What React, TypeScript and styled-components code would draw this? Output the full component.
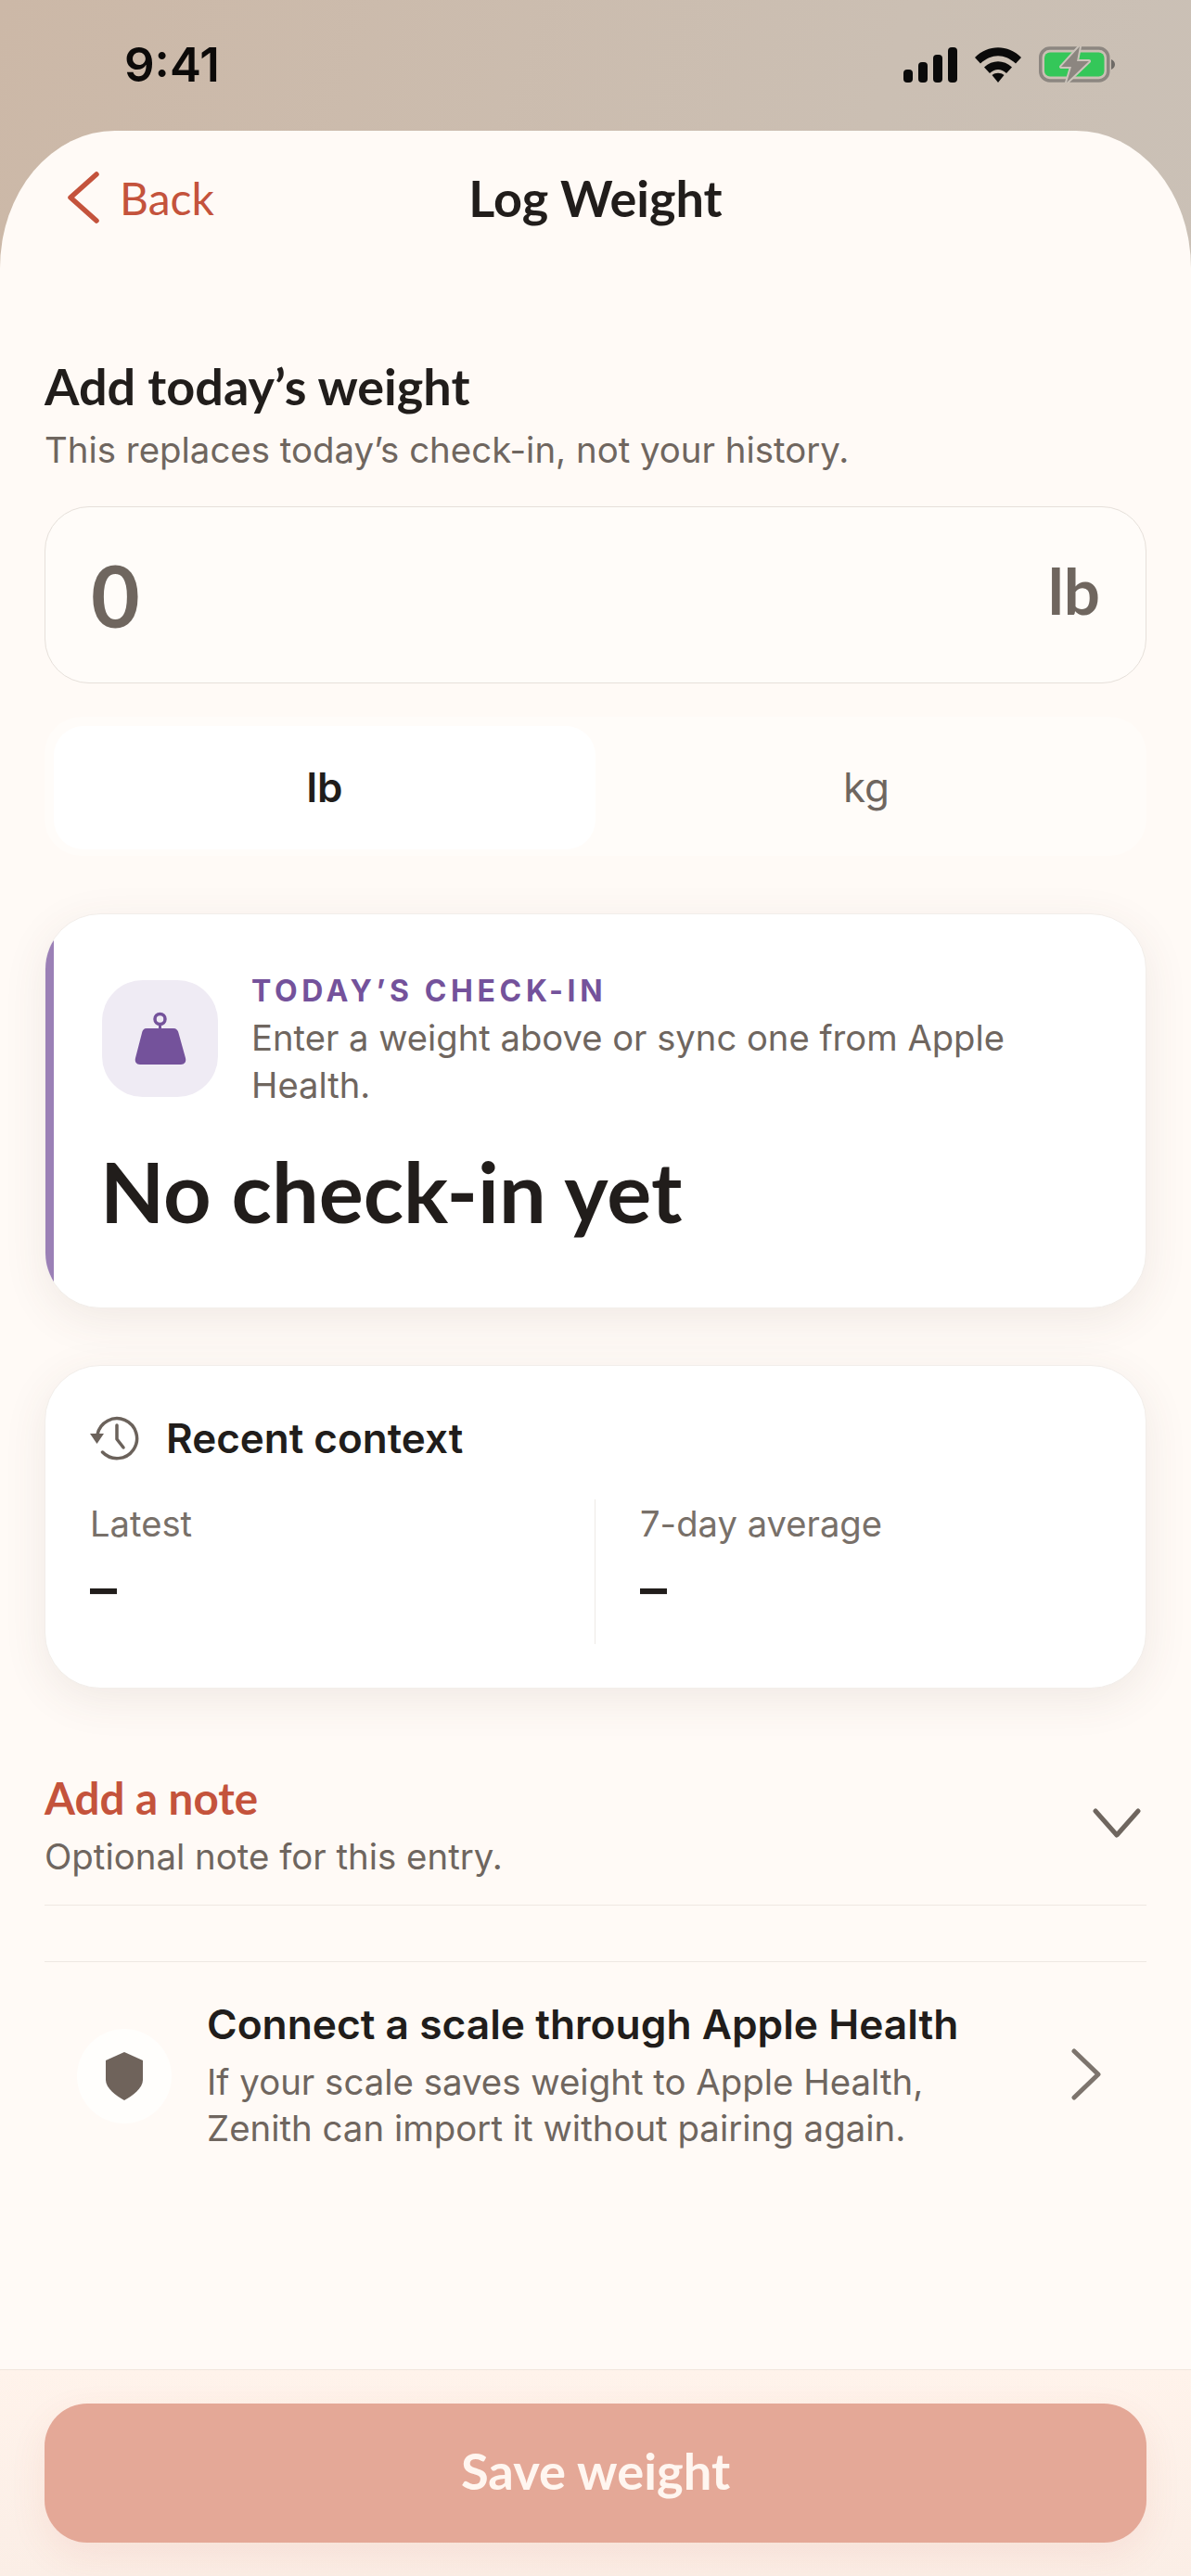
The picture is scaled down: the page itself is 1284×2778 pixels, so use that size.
import styled, { createGlobalStyle } from "styled-components";

const GlobalStyle = createGlobalStyle`
  html, body {
    margin: 0;
    padding: 0;
    background: #fffaf6;
  }
  * {
    box-sizing: border-box;
  }
`;

const display = `"Lato", "Open Sans", sans-serif`;
const body = `"Inter", "Roboto", sans-serif`;

const Screen = styled.div`
  width: 1284px;
  height: 2778px;
  display: flex;
  flex-direction: column;
  overflow: hidden;
  background: linear-gradient(108deg, #ccb8a7 0%, #cbbfb3 45%, #c9c3bc 100%);
  font-family: ${body};
`;

const StatusBar = styled.div`
  height: 141px;
  flex: none;
  display: flex;
  justify-content: space-between;
  align-items: flex-start;
  padding: 40px 82px 0 134px;
`;

const Time = styled.div`
  font-size: 51px;
  line-height: 60px;
  font-weight: 600;
  color: #0c0a09;
`;

const StatusIcons = styled.div`
  display: flex;
  align-items: center;
  gap: 19px;
  padding-top: 10px;
`;

const Sheet = styled.div`
  flex: 1;
  display: flex;
  flex-direction: column;
  border-radius: 124px 124px 0 0 / 148px 148px 0 0;
  background: #fffaf6;
  overflow: hidden;
`;

const Nav = styled.div`
  height: 144px;
  flex: none;
  display: grid;
  grid-template-columns: 1fr auto 1fr;
  align-items: center;
  padding: 0 71px;
`;

const BackLink = styled.div`
  display: flex;
  align-items: center;
  gap: 20px;
  font-family: ${display};
  font-size: 48px;
  color: #c4533c;
`;

const NavTitle = styled.div`
  font-family: ${display};
  font-size: 54px;
  font-weight: 700;
  color: #211d1b;
`;

const Content = styled.div`
  flex: 1;
  padding: 102px 48px 0;
  display: flex;
  flex-direction: column;
`;

const Heading = styled.h2`
  margin: 0;
  font-family: ${display};
  font-size: 54px;
  line-height: 60px;
  font-weight: 700;
  color: #211d1b;
`;

const Muted = styled.p`
  margin: 0;
  font-size: 38.4px;
  line-height: 50px;
  color: #6f665f;
`;

const Subtitle = styled(Muted)`
  margin: 13px 0 36px;
`;

const WeightInput = styled.div`
  height: 191px;
  flex: none;
  display: flex;
  justify-content: space-between;
  align-items: center;
  padding: 0 49px;
  border: 1.5px solid #e6e0da;
  border-radius: 48px;
  background: #fffcf9;
  font-family: ${display};
  color: #6f665f;
`;

const WeightValue = styled.span`
  font-size: 91px;
  font-weight: 700;
  line-height: 100px;
`;

const WeightUnit = styled.span`
  font-size: 69px;
  font-weight: 700;
  line-height: 80px;
  margin-top: -10px;
`;

const Segments = styled.div`
  height: 150px;
  flex: none;
  margin-top: 36px;
  padding: 10px 10px 7px;
  display: grid;
  grid-template-columns: 1fr 1fr;
  border-radius: 40px;
  background: #fffcf9;
`;

const Segment = styled.div<{ $active?: boolean }>`
  display: flex;
  align-items: center;
  justify-content: center;
  padding-bottom: 2px;
  border-radius: 32px;
  font-size: 44px;
  font-weight: ${(props) => (props.$active ? 600 : 400)};
  color: ${(props) => (props.$active ? "#211d1b" : "#6f665f")};
  background: ${(props) => (props.$active ? "#ffffff" : "transparent")};
`;

const Card = styled.div`
  flex: none;
  background: #ffffff;
  border: 1.5px solid #f2eeea;
  border-radius: 60px;
  box-shadow: 0 12px 48px rgba(90, 70, 55, 0.09);
`;

const CheckInCard = styled(Card)`
  height: 426px;
  margin-top: 62px;
  display: flex;
  overflow: hidden;
`;

const AccentBar = styled.div`
  width: 9px;
  flex: none;
  background: #9b80b6;
`;

const CheckInBody = styled.div`
  flex: 1;
  padding: 71px 60px 0 52px;
`;

const CheckInTop = styled.div`
  display: flex;
  gap: 36px;
`;

const IconTile = styled.div`
  width: 125px;
  height: 126px;
  flex: none;
  display: flex;
  align-items: center;
  justify-content: center;
  border-radius: 44px;
  background: #efebf4;
`;

const Eyebrow = styled.div`
  font-size: 32px;
  line-height: 34px;
  margin-top: -5px;
  font-weight: 700;
  letter-spacing: 4.6px;
  color: #74529b;
`;

const CheckInText = styled(Muted)`
  font-size: 38.2px;
  line-height: 51px;
  margin-top: 8px;
`;

const CheckInStatus = styled.div`
  margin-top: 33px;
  margin-left: -2px;
  font-family: ${display};
  font-size: 90px;
  line-height: 110px;
  font-weight: 700;
  color: #211d1b;
`;

const ContextCard = styled(Card)`
  height: 349px;
  margin-top: 61px;
  padding: 50px 50px 0 48px;
`;

const ContextHeader = styled.div`
  display: flex;
  align-items: center;
  gap: 28px;
  height: 56px;
  font-size: 44px;
  font-weight: 600;
  color: #211d1b;
`;

const Stats = styled.div`
  margin-top: 38px;
  display: grid;
  grid-template-columns: 1fr 1fr;
`;

const Stat = styled.div<{ $divided?: boolean }>`
  height: 156px;
  padding-left: ${(props) => (props.$divided ? "48px" : "0")};
  border-left: ${(props) => (props.$divided ? "1.5px solid #eeeae6" : "none")};
`;

const StatLabel = styled(Muted)`
  margin-top: 1px;
  font-size: 38.2px;
  color: #787069;
`;

const StatValue = styled.div`
  margin-top: 15px;
  font-size: 58px;
  line-height: 60px;
  font-weight: 600;
  color: #211d1b;
`;

const NoteRow = styled.div`
  height: 173px;
  flex: none;
  margin-top: 61px;
  padding-top: 27px;
  padding-right: 6px;
  display: flex;
  justify-content: space-between;
  align-items: flex-start;
  border-bottom: 1.5px solid #eee8e2;
`;

const NoteTitle = styled.div`
  font-family: ${display};
  font-size: 47.5px;
  line-height: 60px;
  font-weight: 700;
  color: #c4533c;
`;

const NoteHint = styled(Muted)`
  margin-top: 8px;
`;

const NoteChevron = styled.div`
  padding-top: 40px;
`;

const HealthRow = styled.div`
  margin-top: 60px;
  padding: 38px 48px 0 35px;
  display: flex;
  align-items: flex-start;
  border-top: 1.5px solid #eee8e2;
`;

const ShieldBadge = styled.div`
  width: 102px;
  height: 102px;
  flex: none;
  margin-top: 34px;
  margin-right: 38px;
  display: flex;
  align-items: center;
  justify-content: center;
  border-radius: 50%;
  background: #fffefc;
`;

const HealthText = styled.div`
  flex: 1;
`;

const HealthTitle = styled.div`
  font-size: 44.3px;
  line-height: 58px;
  font-weight: 600;
  color: #211d1b;
`;

const HealthBody = styled(Muted)`
  margin-top: 8px;
`;

const HealthChevron = styled.div`
  padding-top: 55px;
`;

const Footer = styled.div`
  height: 223px;
  flex: none;
  padding: 36px 48px 0;
  border-top: 1.5px solid #f1e6dd;
  background: linear-gradient(180deg, #fff3eb 0%, #fbeee6 100%);
`;

const SaveButton = styled.div`
  height: 150px;
  padding-bottom: 7px;
  display: flex;
  align-items: center;
  justify-content: center;
  border-radius: 46px;
  background: #e4a897;
  box-shadow: 0 14px 40px rgba(196, 83, 60, 0.09);
  font-family: ${display};
  font-size: 54.3px;
  font-weight: 700;
  color: #fff6f0;
`;

const App = () => {
  return (
    <Screen>
      <GlobalStyle />
      <StatusBar>
        <Time>9:41</Time>
        <StatusIcons>
          <svg width="58" height="38" viewBox="0 0 58 38" fill="#0a0a0a">
            <rect x="0" y="24" width="10" height="14" rx="4" />
            <rect x="16" y="16" width="10" height="22" rx="4" />
            <rect x="32" y="8" width="10" height="30" rx="4" />
            <rect x="48" y="0" width="10" height="38" rx="4" />
          </svg>
          <svg width="50" height="38" viewBox="0 0 50 38" fill="#0a0a0a">
            <path d="M0 11 C14 -3.5 36 -3.5 50 11 L44 17.5 C32 6.5 18 6.5 6 17.5 Z" />
            <path d="M10 21.5 C19 13 31 13 40 21.5 L34 28 C28 22.5 22 22.5 16 28 Z" />
            <path d="M18.5 30 C22 27 28 27 31.5 30 L25 38 Z" />
          </svg>
          <svg width="82" height="39" viewBox="0 0 82 39">
            <rect x="1.75" y="2" width="73" height="35" rx="10" fill="none" stroke="#8c8680" strokeWidth="3.5" />
            <rect x="6" y="6.5" width="64.5" height="26" rx="6" fill="#34c759" />
            <path d="M78 14 C80.5 15 82 17 82 19.5 C82 22 80.5 24 78 25 Z" fill="#6e6a66" />
            <path d="M44 0 L24 22 H35 L30 39 L54 16 H41 Z" fill="#8c8680" stroke="#cbc4bb" strokeWidth="4" paintOrder="stroke" strokeLinejoin="round" />
          </svg>
        </StatusIcons>
      </StatusBar>
      <Sheet>
        <Nav>
          <BackLink>
            <svg width="38" height="56" viewBox="0 0 38 56" fill="none" stroke="#c4533c" strokeWidth="5.5" strokeLinecap="round" strokeLinejoin="round">
              <path d="M33 3 L5 28 L33 53" />
            </svg>
            Back
          </BackLink>
          <NavTitle>Log Weight</NavTitle>
        </Nav>
        <Content>
          <Heading>Add today’s weight</Heading>
          <Subtitle>This replaces today’s check-in, not your history.</Subtitle>
          <WeightInput>
            <WeightValue>0</WeightValue>
            <WeightUnit>lb</WeightUnit>
          </WeightInput>
          <Segments>
            <Segment $active>lb</Segment>
            <Segment>kg</Segment>
          </Segments>
          <CheckInCard>
            <AccentBar />
            <CheckInBody>
              <CheckInTop>
                <IconTile>
                  <svg width="56" height="58" viewBox="0 0 56 58" fill="#74529b">
                    <circle cx="27.5" cy="8" r="5.5" fill="none" stroke="#74529b" strokeWidth="3.5" />
                    <rect x="26" y="13" width="3" height="7" />
                    <path d="M13 18 H42 C45 18 47 20 47.5 23 L55 50 C56 54 54 57 50 57 H6 C2 57 0 54 1 50 L8 23 C8.5 20 10 18 13 18 Z" />
                  </svg>
                </IconTile>
                <div>
                  <Eyebrow>TODAY’S CHECK-IN</Eyebrow>
                  <CheckInText>Enter a weight above or sync one from Apple Health.</CheckInText>
                </div>
              </CheckInTop>
              <CheckInStatus>No check-in yet</CheckInStatus>
            </CheckInBody>
          </CheckInCard>
          <ContextCard>
            <ContextHeader>
              <svg width="54" height="48" viewBox="0 0 54 48" fill="none" stroke="#6b625b" strokeWidth="3.5" strokeLinecap="round" strokeLinejoin="round" style={{ flex: "none" }}>
                <path d="M8 20 A21.5 21.5 0 1 1 13.5 39" />
                <path d="M29 10 V25 L36 34" />
                <path d="M0 19 H15 L7.5 30 Z" fill="#6b625b" stroke="none" />
              </svg>
              Recent context
            </ContextHeader>
            <Stats>
              <Stat>
                <StatLabel>Latest</StatLabel>
                <StatValue>–</StatValue>
              </Stat>
              <Stat $divided>
                <StatLabel>7-day average</StatLabel>
                <StatValue>–</StatValue>
              </Stat>
            </Stats>
          </ContextCard>
          <NoteRow>
            <div>
              <NoteTitle>Add a note</NoteTitle>
              <NoteHint>Optional note for this entry.</NoteHint>
            </div>
            <NoteChevron>
              <svg width="52" height="34" viewBox="0 0 52 34" fill="none" stroke="#6f665f" strokeWidth="5" strokeLinecap="round" strokeLinejoin="round">
                <path d="M3 4 L26 30 L49 4" />
              </svg>
            </NoteChevron>
          </NoteRow>
          <HealthRow>
            <ShieldBadge>
              <svg width="42" height="52" viewBox="0 0 42 52" fill="#6f635b">
                <path d="M21 0 L41 9 V30 C41 39 30 47 21 52 C12 47 1 39 1 30 V9 Z" />
              </svg>
            </ShieldBadge>
            <HealthText>
              <HealthTitle>Connect a scale through Apple Health</HealthTitle>
              <HealthBody>
                If your scale saves weight to Apple Health,
                <br />
                Zenith can import it without pairing again.
              </HealthBody>
            </HealthText>
            <HealthChevron>
              <svg width="34" height="56" viewBox="0 0 34 56" fill="none" stroke="#7d746d" strokeWidth="5" strokeLinecap="round" strokeLinejoin="round">
                <path d="M4 3 L30 28 L4 53" />
              </svg>
            </HealthChevron>
          </HealthRow>
        </Content>
        <Footer>
          <SaveButton>Save weight</SaveButton>
        </Footer>
      </Sheet>
    </Screen>
  );
};

export default App;
